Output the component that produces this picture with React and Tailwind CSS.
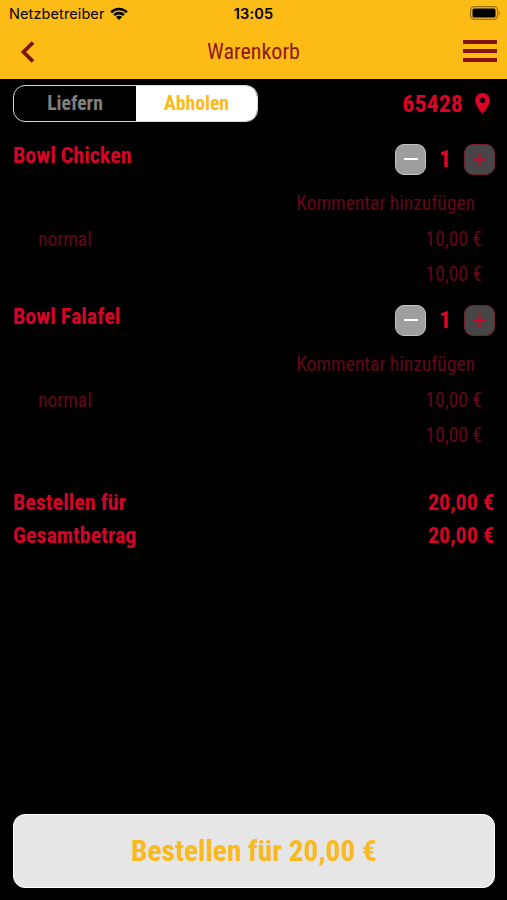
import React, { useState } from 'react';

const price = (n) => n.toFixed(2).replace('.', ',') + ' €';

const StatusBar = () => (
  <div className="relative flex h-7 items-center justify-between pl-[9px] pr-[6px] text-black font-['Inter',sans-serif]">
    <div className="flex items-center gap-[6px]">
      <span className="text-[14.5px] tracking-[0.1px]">Netzbetreiber</span>
      <svg className="mt-[-2px]" width="18" height="13" viewBox="0 0 18 13">
        <path d="M0.3 4.4 A12.2 12.2 0 0 1 17.7 4.4 L15.9 6.2 A9.6 9.6 0 0 0 2.1 6.2 Z" />
        <path d="M3.2 7.3 A8 8 0 0 1 14.8 7.3 L13 9.1 A5.6 5.6 0 0 0 5 9.1 Z" />
        <path d="M6 10 A4 4 0 0 1 12 10 L9 13 Z" />
      </svg>
    </div>
    <span className="absolute inset-x-0 text-center text-[14.5px] font-semibold tracking-[0.2px]">13:05</span>
    <svg className="mt-[-2px]" width="31" height="14" viewBox="0 0 31 14">
      <rect x="0.6" y="0.6" width="27" height="12.8" rx="4" fill="none" stroke="#000" strokeOpacity="0.4" strokeWidth="1.2" />
      <rect x="2.5" y="2.5" width="23" height="9" rx="1.5" />
      <path d="M29 5 Q31 7 29 9 Z" fillOpacity="0.45" />
    </svg>
  </div>
);

const CartItem = ({ item }) => (
  <div className="h-[161px]">
    <div className="flex h-12 items-center justify-between">
      <span className="mb-[7px] text-[22px] font-bold text-[#d90327]">{item.name}</span>
      <div className="flex items-center">
        <button className="flex size-[31px] items-center justify-center rounded-[9px] border border-[#c4c4c4] bg-[#9e9e9e]">
          <span className="h-[2px] w-[14px] bg-white" />
        </button>
        <span className="w-[38px] text-center text-[24px] font-bold text-[#e30422]">{item.count}</span>
        <button className="flex size-[31px] items-center justify-center rounded-[9px] border border-[#722034] bg-[#464646]">
          <svg width="13" height="13" viewBox="0 0 13 13" stroke="#c90428" strokeWidth="2">
            <path d="M6.5 0V13M0 6.5H13" />
          </svg>
        </button>
      </div>
    </div>
    <div className="mt-[3px] flex h-[36px] items-center justify-end pr-5 text-[19.5px] text-[#660619]">
      <span>Kommentar hinzufügen</span>
    </div>
    <div className="flex h-[35px] items-center justify-between pl-[25px] pr-[13px] text-[19.5px] text-[#660619]">
      <span>normal</span>
      <span>{price(item.price)}</span>
    </div>
    <div className="flex h-[35px] items-center justify-end pr-[13px] text-[19.5px] text-[#660619]">
      <span>{price(item.price * item.count)}</span>
    </div>
  </div>
);

const App = () => {
  const [items] = useState([
    { name: 'Bowl Chicken', count: 1, price: 10 },
    { name: 'Bowl Falafel', count: 1, price: 10 },
  ]);
  const total = items.reduce((sum, i) => sum + i.price * i.count, 0);

  return (
    <div className="flex h-screen w-full flex-col overflow-hidden whitespace-nowrap bg-black font-['Roboto_Condensed','Roboto',sans-serif] [font-stretch:75%]">
      {/* Header */}
      <div className="h-[79px] shrink-0 bg-[#fdbb16]">
        <StatusBar />
        <div className="relative flex h-[47px] items-center justify-between pl-5 pr-[10px]">
          <svg width="15" height="22" viewBox="0 0 15 22" fill="none" stroke="#7d1010" strokeWidth="3.8">
            <path d="M13 1.5L3.5 11L13 20.5" />
          </svg>
          <span className="absolute inset-x-0 text-center text-[22px] text-[#8c1a12]">Warenkorb</span>
          <div className="flex flex-col gap-[5px] pb-px">
            <span className="h-1 w-[34px] bg-[#851310]" />
            <span className="h-1 w-[34px] bg-[#851310]" />
            <span className="h-1 w-[34px] bg-[#851310]" />
          </div>
        </div>
      </div>

      {/* Delivery / pickup */}
      <div className="mt-[6px] flex h-[37px] shrink-0 items-center justify-between pl-[13px] pr-[17px]">
        <div className="flex h-[37px] w-[245px] overflow-hidden rounded-[12px] border border-[#d8d8d8] text-[19.7px] font-bold">
          <button className="w-[122px] text-[#808080]">Liefern</button>
          <button className="flex-1 bg-white text-[#fcb91c]">Abholen</button>
        </div>
        <div className="flex items-center gap-[12px] text-[#dd0325]">
          <span className="text-[24px] font-bold">65428</span>
          <svg width="15" height="21" viewBox="5 2 14 20" fill="currentColor">
            <path d="M12 2C8.13 2 5 5.13 5 9c0 5.25 7 13 7 13s7-7.75 7-13c0-3.87-3.13-7-7-7zm0 9.5a2.5 2.5 0 1 1 0-5 2.5 2.5 0 0 1 0 5z" />
          </svg>
        </div>
      </div>

      {/* Items */}
      <div className="mt-[13px] pl-[13px] pr-3">
        {items.map((item) => (
          <CartItem key={item.name} item={item} />
        ))}
      </div>

      {/* Totals */}
      <div className="mt-[29px] pl-[13px] pr-[13px] text-[22px] font-bold text-[#d30527]">
        <div className="flex h-[33px] items-center justify-between">
          <span>Bestellen für</span>
          <span>{price(total)}</span>
        </div>
        <div className="flex h-[33px] items-center justify-between">
          <span>Gesamtbetrag</span>
          <span>{price(total)}</span>
        </div>
      </div>

      <button className="ml-[13px] mr-3 mb-3 mt-auto h-[74px] shrink-0 rounded-[12px] border border-white bg-[#e6e6e6] text-[29.4px] font-bold text-[#fab91d]">
        <span>Bestellen für {price(total)}</span>
      </button>
    </div>
  );
};

export default App;
